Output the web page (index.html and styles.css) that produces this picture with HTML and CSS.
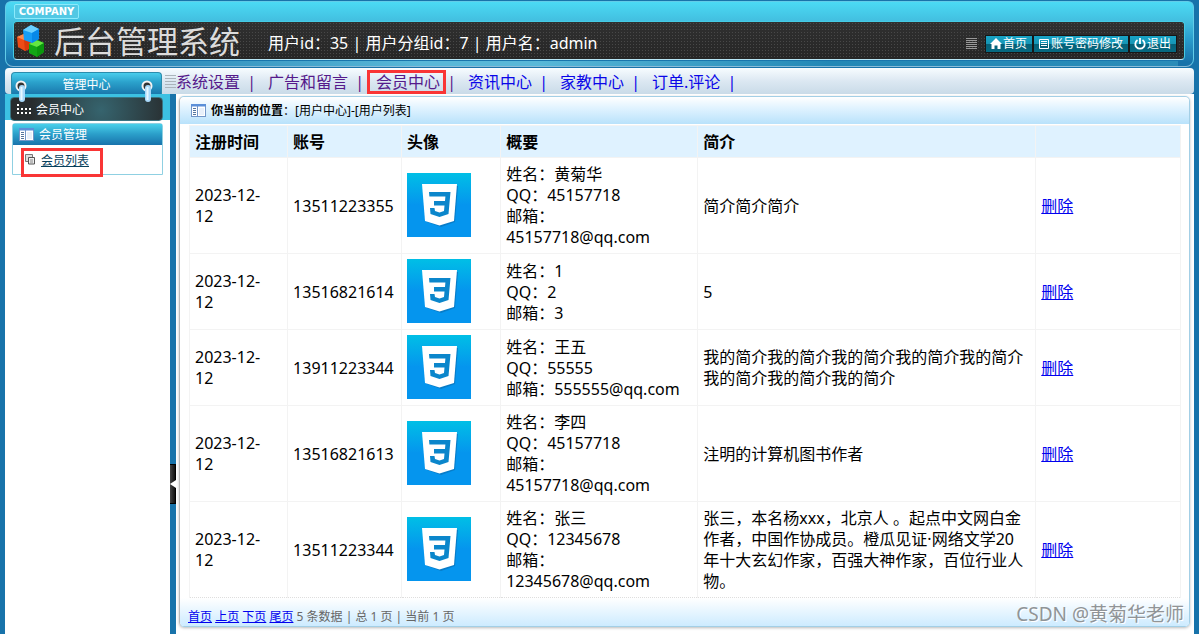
FILE: index.html
```html
<!DOCTYPE html>
<html lang="zh-CN">
<head>
<meta charset="utf-8">
<title>后台管理系统</title>
<link rel="stylesheet" href="styles.css">
</head>
<body>
<svg class="defs" width="0" height="0" aria-hidden="true">
  <defs>
    <linearGradient id="sky" x1="0" y1="0" x2="0" y2="1">
      <stop offset="0" stop-color="#00bfe6"/><stop offset=".5" stop-color="#0595ee"/><stop offset="1" stop-color="#0595ee"/>
    </linearGradient>
    <symbol id="avatar" viewBox="0 0 64 64">
      <rect width="64" height="64" fill="url(#sky)"/>
      <path d="M17 13 L51 13 L48 49 L34 54 L20 49 Z" fill="#087cc8"/>
      <path d="M15 11 H50 L47 48 L32.500 52.500 L18 48 Z" fill="#fff"/>
      <path d="M22 19 H43.500 L41.500 41 L32.500 44 L23.500 41 L23 35 H27.500 L28 38 L32.500 39.500 L37 38 L37.500 32.500 H27 V28 H38 L38.400 23.500 H22.400 Z" fill="#0b86cb"/>
    </symbol>
    <symbol id="window" viewBox="0 0 15 13">
      <rect x=".5" y=".5" width="14" height="12" fill="#fff" stroke="#7296c8"/>
      <path d="M0 0H15V2.500H0Z" fill="#5b8fd8"/><path d="M6.500 2V12" stroke="#7296c8"/>
      <path d="M2 4.500H5M2 6.500H5M2 8.500H5M2 10.500H5" stroke="#55759c"/>
      <path d="M8 4H13V11H8Z" fill="#e8f0fa"/>
    </symbol>
    <symbol id="ring" viewBox="0 0 13 24">
      <circle cx="6" cy="7" r="4.500" fill="#333" stroke="#f3f3f3" stroke-width="2"/>
      <rect x="4" y="6" width="6" height="17" rx="3" fill="#a9d9fa"/>
      <path d="M6.500 8V21" stroke="#e7f7ff" stroke-width="2"/>
    </symbol>
  </defs>
</svg>

<header class="top">
  <div class="company"><span>COMPANY</span></div>
  <div class="banner">
    <svg class="logo" viewBox="0 0 28 32" aria-hidden="true">
      <path d="M0 12 L9 8 L14 13 V23 L8 26 L1 22Z" fill="#ef4b16"/><path d="M0 12 L9 8 L14 13 L7 15Z" fill="#ff8b4b"/><path d="M7 15L14 13V23L8 26Z" fill="#d93a0b"/>
      <path d="M12 19 L19 14 L27 18 V27 L20 32 L12 28Z" fill="#12a716"/><path d="M12 19L19 15L27 18L20 22Z" fill="#65e641"/><path d="M20 22L27 18V27L20 32Z" fill="#0b970e"/>
      <path d="M6 5 L14 0 L22 4 V14 L15 18 L7 15Z" fill="#159df7"/><path d="M6 5L14 0L22 4L15 8Z" fill="#6bd0ff"/><path d="M15 8L22 4V14L15 18Z" fill="#0788e8"/>
    </svg>
    <h1 class="title">后台管理系统</h1>
    <p class="user">用户id：35 | 用户分组id：7 | 用户名：admin</p>
    <span class="grip grip-dark"></span>
    <div class="tools">
      <a href="#"><svg class="tool-icon" viewBox="0 0 12 12"><path d="M6 0 L12 6 H10.500 V11 H7.500 V7.500 H4.500 V11 H1.500 V6 H0Z" fill="#fff"/></svg>首页</a>
      <a href="#"><svg class="tool-icon" viewBox="0 0 12 12"><path d="M1.500 1.500H10.500V10.500H1.500ZM3 3.500H9M3 5.500H9M3 7.500H9" fill="none" stroke="#fff"/></svg>账号密码修改</a>
      <a href="#"><svg class="tool-icon" viewBox="0 0 12 12"><path d="M3.500 2A4.700 4.700 0 1 0 8.500 2M6 0V6" fill="none" stroke="#fff" stroke-width="1.800"/></svg>退出</a>
    </div>
  </div>
  <div class="strip"></div>
</header>

<div class="navbar">
  <div class="tab">管理中心
    <svg class="ring ring-left"><use href="#ring"/></svg>
    <svg class="ring ring-right"><use href="#ring"/></svg>
  </div>
  <span class="grip"></span>
  <nav class="links">
    <a class="visited" href="#">系统设置</a>
    <a class="visited" href="#">广告和留言</a>
    <a class="visited marked" href="#">会员中心</a>
    <a href="#">资讯中心</a>
    <a href="#">家教中心</a>
    <a href="#">订单.评论</a>
  </nav>
</div>

<div class="body">
  <aside class="side">
    <div class="side-top">
      <h2 class="group">
        <svg class="dots" viewBox="0 0 16 12"><path d="M1 1H3V3H1ZM1 5H3V7H1ZM5 5H7V7H5ZM9 5H11V7H9ZM13 5H15V7H13ZM1 9H3V11H1ZM5 9H7V11H5ZM9 9H11V11H9ZM13 9H15V11H13Z" fill="#fff"/></svg>会员中心</h2>
    </div>
    <section class="menu">
      <h3 class="menu-head"><svg class="win"><use href="#window"/></svg>会员管理</h3>
      <div class="menu-list">
        <a href="#"><svg class="copy" viewBox="0 0 11 11"><path d="M.5.5H7.500V7.500H.5Z" fill="#ddd" stroke="#777"/><path d="M3.500 3.500H9.500V10H3.500Z" fill="#eee" stroke="#555"/><path d="M5 6H8M5 8H8" stroke="#888"/></svg><span>会员列表</span></a>
      </div>
    </section>
  </aside>
  <div class="splitter"><button class="handle" aria-label="收起菜单"><svg viewBox="0 0 6 10"><path d="M6 1V9L0 5Z" fill="#fff"/></svg></button></div>
  <main class="main">
    <div class="panel">
      <div class="crumb"><svg class="win"><use href="#window"/></svg><b>你当前的位置</b>：<span>[用户中心]-[用户列表]</span></div>
      <table class="grid">
        <colgroup><col class="c-date"><col class="c-account"><col class="c-photo"><col class="c-info"><col class="c-intro"><col></colgroup>
        <thead><tr><th>注册时间</th><th>账号</th><th>头像</th><th>概要</th><th>简介</th><th></th></tr></thead>
        <tbody>
          <tr><td>2023-12-<br>12</td><td>13511223355</td><td class="photo"><svg class="avatar"><use href="#avatar"/></svg></td><td>姓名：黄菊华<br>QQ：45157718<br>邮箱：<br>45157718@qq.com</td><td class="intro">简介简介简介</td><td><a href="#">删除</a></td></tr>
          <tr><td>2023-12-<br>12</td><td>13516821614</td><td class="photo"><svg class="avatar"><use href="#avatar"/></svg></td><td>姓名：1<br>QQ：2<br>邮箱：3</td><td class="intro">5</td><td><a href="#">删除</a></td></tr>
          <tr><td>2023-12-<br>12</td><td>13911223344</td><td class="photo"><svg class="avatar"><use href="#avatar"/></svg></td><td>姓名：王五<br>QQ：55555<br>邮箱：555555@qq.com</td><td class="intro">我的简介我的简介我的简介我的简介我的简介我的简介我的简介我的简介</td><td><a href="#">删除</a></td></tr>
          <tr><td>2023-12-<br>12</td><td>13516821613</td><td class="photo"><svg class="avatar"><use href="#avatar"/></svg></td><td>姓名：李四<br>QQ：45157718<br>邮箱：<br>45157718@qq.com</td><td class="intro">注明的计算机图书作者</td><td><a href="#">删除</a></td></tr>
          <tr><td>2023-12-<br>12</td><td>13511223344</td><td class="photo"><svg class="avatar"><use href="#avatar"/></svg></td><td>姓名：张三<br>QQ：12345678<br>邮箱：<br>12345678@qq.com</td><td class="intro">张三，本名杨xxx，北京人 。起点中文网白金作者，中国作协成员。橙瓜见证·网络文学20年十大玄幻作家，百强大神作家，百位行业人物。</td><td><a href="#">删除</a></td></tr>
        </tbody>
      </table>
      <div class="pager"><a href="#">首页</a> <a href="#">上页</a> <a href="#">下页</a> <a href="#">尾页</a> 5 条数据 | 总 1 页 | 当前 1 页</div>
    </div>
    <div class="watermark">CSDN @黄菊华老师</div>
  </main>
</div>
</body>
</html>
```
FILE: styles.css
```css
* { box-sizing: border-box; }
body {
  margin: 0;
  min-height: 100vh;
  display: flex;
  flex-direction: column;
  padding: 0 5px;
  background: #1873aa;
  font-family: "Noto Sans", "Noto Sans CJK SC", sans-serif;
  font-size: 16px;
  line-height: 21px;
  color: #000;
}
h1, h2, h3, p { margin: 0; font-weight: normal; }
.defs { position: absolute; }

.top {
  margin: 1px 0 1px;
  height: 66px;
  padding: 2px 8px 0 7px;
  border: 1px solid #62cce8;
  border-bottom-color: #8abbd6;
  border-radius: 6px 6px 8px 8px;
  background: linear-gradient(#4bdaf4, #42bfe0 19px, #289acb 38px, #1873aa 60px);
  display: flex;
  flex-direction: column;
}
.company {
  align-self: flex-start;
  width: 65px;
  height: 15px;
  margin: 0 0 2px 1px;
  border: 1px solid #8beafb;
  border-radius: 2px;
  background: #52c8e4;
  color: #fff;
  font: bold 10px/13px "DejaVu Sans", sans-serif;
  text-align: center;
}
.company span { display: block; }
.banner {
  height: 39px;
  flex: none;
  display: flex;
  align-items: center;
  padding: 0 7px 0 3px;
  border: 1px solid #45cbe3;
  border-bottom-color: #b9e6f5;
  border-radius: 4px;
  background: radial-gradient(#484848 1px, transparent 1px) 0 0 / 3px 3px, linear-gradient(#303030, #262626);
}
.logo { width: 28px; height: 32px; flex: none; }
.title {
  margin-left: 9px;
  font-size: 31px;
  line-height: 36px;
  color: #dcdcdc;
  white-space: nowrap;
}
.user { margin: 5px auto 0 28px; color: #fff; white-space: nowrap; }
.grip {
  width: 11px;
  height: 13px;
  flex: none;
  background: repeating-linear-gradient(#aab4bb 0 1px, transparent 1px 3px);
}
.grip-dark { margin: 6px 8px 0 0; background: repeating-linear-gradient(#999 0 1px, transparent 1px 2px); height: 11px; }
.tools { display: flex; margin-top: 6px; background: #171717; padding: 1px; gap: 2px; }
.tools a {
  display: flex;
  align-items: center;
  height: 16px;
  padding: 0 5px 0 4px;
  gap: 1px;
  background: linear-gradient(#18a3c5, #1695b4 8px, #056077 8px, #066a82);
  color: #fff;
  font-size: 12px;
  line-height: 16px;
  text-decoration: none;
  white-space: nowrap;
}
.tool-icon { width: 12px; height: 12px; }
.strip {
  height: 6px;
  margin: 1px 7px 0 0;
  background: linear-gradient(90deg, #1873aa, #58b8d8 35%, #58b8d8 45%, #2388b6 70%, #2a8cb8);
}

.navbar {
  height: 26px;
  display: flex;
  align-items: center;
  border-radius: 4px;
  background: linear-gradient(#f7fcff, #dce8f2 13px, #c9dbe8);
}
.tab {
  position: relative;
  align-self: flex-end;
  width: 151px;
  height: 22px;
  margin: 0 3px 0 6px;
  border: 1px solid #2a8cad;
  border-bottom: 0;
  border-radius: 4px 4px 0 0;
  background: linear-gradient(#49cdec, #2ba2cc 9px, #1a78ad);
  color: #fff;
  font-size: 12px;
  line-height: 23px;
  text-align: center;
}
.ring { position: absolute; top: 6px; width: 13px; height: 24px; z-index: 2; }
.ring-left { left: 3px; }
.ring-right { right: 7px; }
.links { display: flex; padding-top: 2px; white-space: nowrap; }
.links a { position: relative; color: #0a06e8; text-decoration: none; padding-right: 28px; }
.links a::after { content: "|"; position: absolute; right: 12px; }
.links .visited { color: #551a8b; }
.links .marked::before {
  content: "";
  position: absolute;
  inset: -2px 22px -1px -9px;
  border: 3px solid #f93535;
}

.body { flex: 1; display: flex; }
.side { width: 165px; flex: none; background: #fff; }
.side-top { height: 26px; padding: 3px 7px 0 5px; background: #3cc1e2; }
.group {
  height: 24px;
  display: flex;
  align-items: center;
  gap: 4px;
  padding-left: 5px;
  border: 1px solid #3a7482;
  border-radius: 4px;
  background: radial-gradient(circle at 90px 12px, #36646e, #282c2e 70px);
  color: #fff;
  font-size: 12px;
}
.dots { width: 16px; height: 12px; }
.menu { margin: 3px 7px 0 7px; border: 1px solid #8fd0e2; border-radius: 3px 3px 0 0; }
.menu-head {
  height: 21px;
  display: flex;
  align-items: center;
  gap: 5px;
  padding-left: 6px;
  background: linear-gradient(#49d0ea, #2b9fca 10px, #1873ac);
  color: #fff;
  font-size: 12px;
}
.win { width: 15px; height: 13px; flex: none; }
.menu-list { height: 29px; padding: 3px 8px 0; }
.menu-list a {
  display: flex;
  width: 82px;
  height: 29px;
  gap: 5px;
  padding: 1px 0 0 1px;
  border: 3px solid #f93535;
  color: #07405c;
  font-size: 12px;
  line-height: 18px;
  text-decoration: none;
  white-space: nowrap;
}
.menu-list span { text-decoration: underline; height: 18px; }
.copy { width: 11px; height: 11px; margin-top: 2px; }

.splitter { position: relative; width: 6px; flex: none; }
.handle {
  position: absolute;
  top: 370px;
  left: 0;
  width: 6px;
  height: 40px;
  padding: 0;
  border: 1px solid #000;
  border-left: 0;
  background: linear-gradient(90deg, #444, #111);
  display: flex;
  align-items: center;
}
.handle svg { width: 6px; height: 10px; flex: none; }

.main { position: relative; flex: 1; min-width: 0; padding: 2px 4px 6px 3px; background: #fff; }
.panel {
  border: 1px solid #a3cfe6;
  border-left-color: #bbb;
  border-radius: 5px;
  box-shadow: 0 1px 3px #bbb;
}
.crumb {
  height: 27px;
  display: flex;
  align-items: center;
  padding-left: 11px;
  background: linear-gradient(#fff, #def2ff 12px, #b9e2fb);
  border-radius: 5px 5px 0 0;
  font-size: 12px;
  white-space: nowrap;
}
.crumb b { margin-left: 5px; }
.grid {
  width: calc(100% - 17px);
  margin: 1px 8px 0 9px;
  table-layout: fixed;
  border-collapse: collapse;
}
.c-date { width: 9.9%; }
.c-account { width: 11.5%; }
.c-photo { width: 10%; }
.c-info { width: 19.9%; }
.c-intro { width: 34.1%; }
.grid th, .grid td {
  padding: 6px 5px 5px;
  border: 1px solid #f3f3f3;
  text-align: left;
  vertical-align: middle;
}
.grid td { border-bottom: 1px dotted #dedede; }
.grid th { padding-bottom: 4px; background: #dff2ff; }
.grid .photo { padding: 5px 5px 6px; }
.grid .intro { padding-right: 8px; }
.grid a, .pager a { color: #0000ee; }
.avatar { display: block; width: 64px; height: 64px; }
.pager {
  height: 28px;
  padding: 9px 8px 0;
  border-radius: 0 0 4px 4px;
  background: linear-gradient(#fff, #cdebff);
  color: #666;
  font-size: 12px;
  line-height: 20px;
}
.watermark {
  position: absolute;
  right: 10px;
  bottom: 7px;
  color: #909497;
  text-shadow: 1px 1px 0 #fff;
  font-size: 19px;
  line-height: 26px;
  white-space: nowrap;
}
```
